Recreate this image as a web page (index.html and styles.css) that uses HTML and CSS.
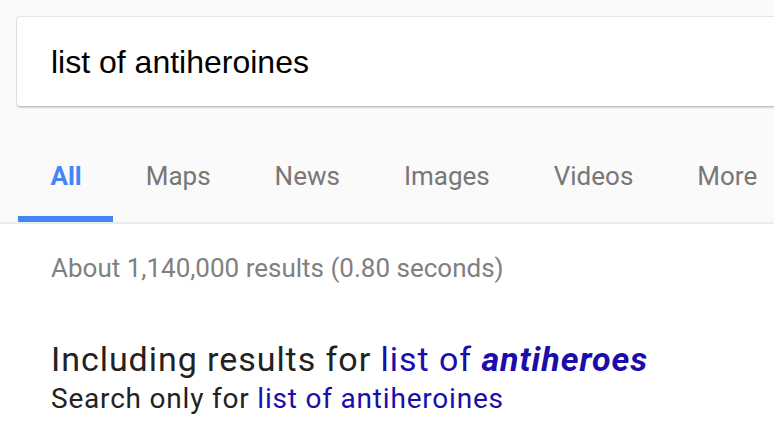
FILE: index.html
```html
<!DOCTYPE html>
<html>
<head>
<meta charset="utf-8">
<link rel="stylesheet" href="styles.css">
</head>
<body>
<div class="top">
  <div class="searchbox">
    <span class="query">list of antiheroines</span>
  </div>
  <nav class="tabs">
    <a class="tab active">All</a>
    <a class="tab">Maps</a>
    <a class="tab">News</a>
    <a class="tab">Images</a>
    <a class="tab">Videos</a>
    <a class="tab">More</a>
  </nav>
</div>
<div class="content">
  <div class="stats">About 1,140,000 results (0.80 seconds)</div>
  <div class="spell">Including results for <a class="link">list of <b><i>antiheroes</i></b></a></div>
  <div class="only">Search only for <a class="link">list of antiheroines</a></div>
</div>
</body>
</html>
```
FILE: styles.css
```css
html, body {
  margin: 0;
  padding: 0;
  overflow: hidden;
  background: #fff;
  font-family: Roboto, "Liberation Sans", Arial, sans-serif;
}
.top {
  background: #fafafa;
  border-bottom: 2px solid #ebebeb;
  padding-top: 17px;
  width: 774px;
  overflow: hidden;
}
.searchbox {
  width: 820px;
  height: 89px;
  margin-left: 17px;
  background: #fff;
  border-radius: 3px;
  box-shadow: 0 2px 2px rgba(0,0,0,0.16), 0 0 0 1px rgba(0,0,0,0.08);
  display: flex;
  align-items: center;
  padding-left: 34px;
  box-sizing: border-box;
}
.query {
  font-family: "Liberation Sans", Arial, sans-serif;
  font-size: 32px;
  color: #000;
  position: relative;
  top: 1px;
}
.tabs {
  display: flex;
  margin-top: 55px;
  margin-left: 18px;
  white-space: nowrap;
}
.tab {
  font-size: 26px;
  color: #777;
  padding: 0 31.5px 25px 32.5px;
  border-bottom: 6px solid transparent;
  line-height: 30px;
}
.tab.active {
  color: #4285f4;
  font-weight: bold;
  border-bottom-color: #4285f4;
}
.content {
  padding-left: 51px;
}
.stats {
  margin-top: 29px;
  font-size: 26px;
  color: #808080;
  line-height: 30px;
}
.spell {
  margin-top: 57px;
  font-size: 34px;
  letter-spacing: 0.95px;
  color: #222;
  line-height: 38px;
  white-space: nowrap;
}
.only {
  margin-top: 4px;
  font-size: 28px;
  letter-spacing: 0.8px;
  color: #222;
  line-height: 34px;
  white-space: nowrap;
}
.link {
  color: #1a0dab;
}
```
